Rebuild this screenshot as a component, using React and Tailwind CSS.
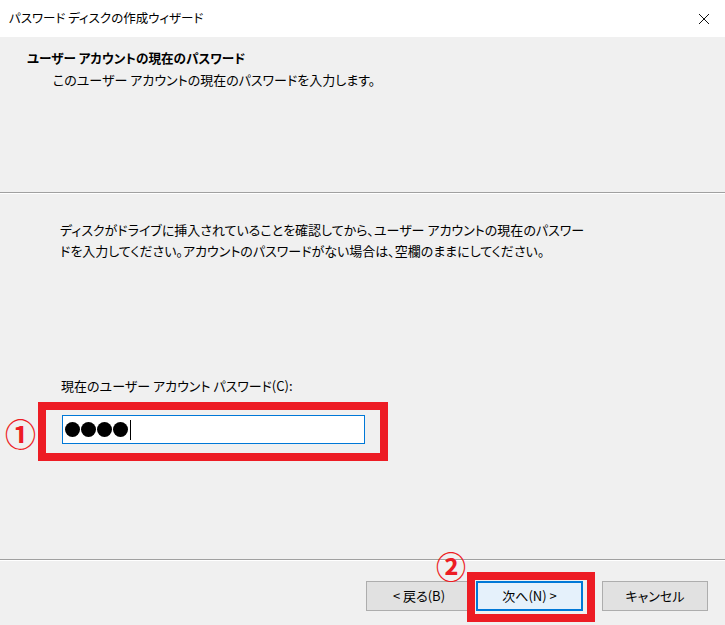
// App.jsx — パスワード ディスクの作成ウィザード (Windows wizard page, annotated)

const JP = "font-['Noto_Sans_CJK_JP',sans-serif] [font-feature-settings:'palt']";

export default function App() {
  return (
    <div className={`relative w-[725px] h-[625px] bg-[#f0f0f0] text-black flex flex-col overflow-hidden ${JP}`}>
      {/* Title bar */}
      <div className="h-[37px] bg-white flex items-center justify-between pl-[9px] pr-[15px] shrink-0">
        <span className="text-[12.5px]">パスワード ディスクの作成ウィザード</span>
        <svg width="12" height="12" viewBox="0 0 12 12">
          <path d="M1 1 L11 11 M11 1 L1 11" stroke="#111" strokeWidth="1" fill="none" />
        </svg>
      </div>

      {/* Header */}
      <div className="h-[155px] shrink-0 pt-[10px] leading-[22px] text-[13px]">
        <div className="pl-[27px] font-bold text-[12.6px]">ユーザー アカウントの現在のパスワード</div>
        <div className="pl-[53px]">このユーザー アカウントの現在のパスワードを入力します。</div>
      </div>
      <div className="h-px bg-[#a0a0a0] shrink-0" />
      <div className="h-px bg-white shrink-0" />

      {/* Body */}
      <div className="flex-1 flex flex-col pt-[25px] text-[13px] leading-[21px]">
        <p className="pl-[60px] w-[600px]">
          ディスクがドライブに挿入されていることを確認してから、ユーザー アカウントの現在のパスワー
          <br />
          ドを入力してください。アカウントのパスワードがない場合は、空欄のままにしてください。
        </p>
        <div className="mt-[114px] pl-[61px]">現在のユーザー アカウント パスワード(C):</div>

        {/* annotated input */}
        <div className="mt-[6px] ml-[38px] w-[350px] h-[59px] border-[8px] border-[#ed1c24] pl-[16px] pt-[5px]">
          <div className="w-[303px] h-[29px] bg-white border border-[#0078d7] flex items-center pl-[2px] gap-[1px]">
            <span className="w-[15px] h-[15px] rounded-full bg-black" />
            <span className="w-[15px] h-[15px] rounded-full bg-black" />
            <span className="w-[15px] h-[15px] rounded-full bg-black" />
            <span className="w-[15px] h-[15px] rounded-full bg-black" />
            <span className="w-px h-[20px] bg-black ml-[1px]" />
          </div>
        </div>
      </div>

      {/* Footer */}
      <div className="h-px bg-[#a0a0a0] shrink-0" />
      <div className="h-px bg-white shrink-0" />
      <div className="h-[64px] shrink-0 flex items-start justify-end pt-[20px] pr-[17px] text-[13px]">
        <button className="w-[106px] h-[30px] bg-[#e1e1e1] border border-[#adadad]">&lt; 戻る(B)</button>
        <button className="ml-[4px] w-[107px] h-[30px] bg-[#e5f1fb] border-2 border-[#0078d7]">次へ(N) &gt;</button>
        <button className="ml-[19px] w-[106px] h-[30px] bg-[#e1e1e1] border border-[#adadad]">キャンセル</button>
      </div>

      {/* Annotations */}
      <div className="absolute left-[467px] top-[572px] w-[128px] h-[50px] border-[8px] border-[#ed1c24]" />
      <span className="absolute left-[5px] top-[417px] text-[31px] leading-none text-[#ed1c24] font-bold">①</span>
      <span className="absolute left-[436px] top-[550px] text-[30px] leading-none text-[#ed1c24] font-bold">②</span>
    </div>
  );
}
